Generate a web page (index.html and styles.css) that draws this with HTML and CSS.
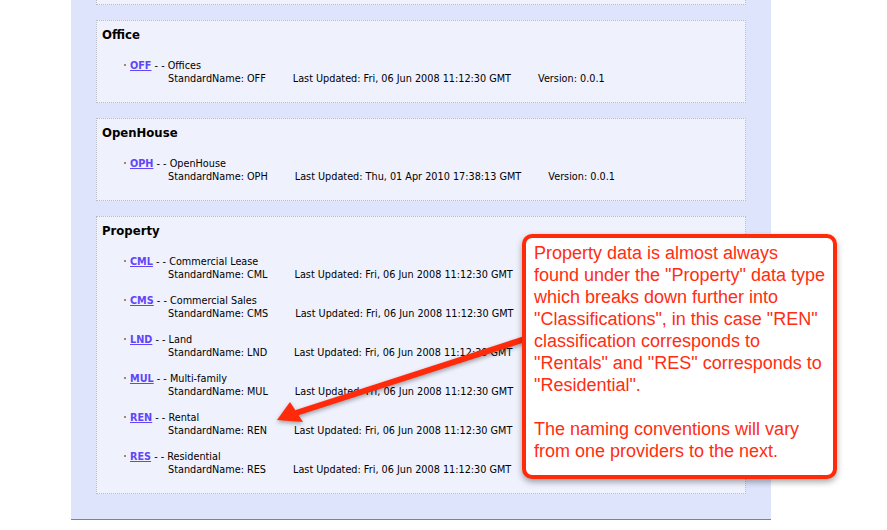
FILE: index.html
```html
<!DOCTYPE html>
<html lang="en">
<head>
    <meta charset="UTF-8">
    <title>Metadata - Resource Classes</title>
    <link rel="stylesheet" href="styles.css">
</head>
<body>
    <div class="page">
        <div class="section stub"></div>

        <div class="section">
            <h2 class="section-title">Office</h2>
            <ul class="types">
                <li>
                    <div class="type-line"><span class="dot"></span><a href="#">OFF</a> - - Offices</div>
                    <div class="meta"><span>StandardName: OFF</span><span class="upd">Last Updated: Fri, 06 Jun 2008 11:12:30 GMT</span><span class="ver">Version: 0.0.1</span></div>
                </li>
            </ul>
        </div>

        <div class="section">
            <h2 class="section-title">OpenHouse</h2>
            <ul class="types">
                <li>
                    <div class="type-line"><span class="dot"></span><a href="#">OPH</a> - - OpenHouse</div>
                    <div class="meta"><span>StandardName: OPH</span><span class="upd">Last Updated: Thu, 01 Apr 2010 17:38:13 GMT</span><span class="ver">Version: 0.0.1</span></div>
                </li>
            </ul>
        </div>

        <div class="section">
            <h2 class="section-title">Property</h2>
            <ul class="types">
                <li>
                    <div class="type-line"><span class="dot"></span><a href="#">CML</a> - - Commercial Lease</div>
                    <div class="meta"><span>StandardName: CML</span><span class="upd">Last Updated: Fri, 06 Jun 2008 11:12:30 GMT</span><span class="ver">Version: 0.0.1</span></div>
                </li>
                <li>
                    <div class="type-line"><span class="dot"></span><a href="#">CMS</a> - - Commercial Sales</div>
                    <div class="meta"><span>StandardName: CMS</span><span class="upd">Last Updated: Fri, 06 Jun 2008 11:12:30 GMT</span><span class="ver">Version: 0.0.1</span></div>
                </li>
                <li>
                    <div class="type-line"><span class="dot"></span><a href="#">LND</a> - - Land</div>
                    <div class="meta"><span>StandardName: LND</span><span class="upd">Last Updated: Fri, 06 Jun 2008 11:12:30 GMT</span><span class="ver">Version: 0.0.1</span></div>
                </li>
                <li>
                    <div class="type-line"><span class="dot"></span><a href="#">MUL</a> - - Multi-family</div>
                    <div class="meta"><span>StandardName: MUL</span><span class="upd">Last Updated: Fri, 06 Jun 2008 11:12:30 GMT</span><span class="ver">Version: 0.0.1</span></div>
                </li>
                <li>
                    <div class="type-line"><span class="dot"></span><a href="#">REN</a> - - Rental</div>
                    <div class="meta"><span>StandardName: REN</span><span class="upd">Last Updated: Fri, 06 Jun 2008 11:12:30 GMT</span><span class="ver">Version: 0.0.1</span></div>
                </li>
                <li>
                    <div class="type-line"><span class="dot"></span><a href="#">RES</a> - - Residential</div>
                    <div class="meta"><span>StandardName: RES</span><span class="upd">Last Updated: Fri, 06 Jun 2008 11:12:30 GMT</span><span class="ver">Version: 0.0.1</span></div>
                </li>
            </ul>
        </div>
    </div>

    <!-- annotation overlay -->
    <svg class="arrow" viewBox="0 0 887 530" width="887" height="530">
        <line x1="528" y1="338" x2="296" y2="413" stroke="#ff2a0a" stroke-width="6"/>
        <polygon points="277,420 290,402 303,422" fill="#ff2a0a"/>
    </svg>

    <div class="callout">
        <p>Property data is almost always found under the "Property" data type which breaks down further into "Classifications", in this case "REN" classification corresponds to "Rentals" and "RES" corresponds to "Residential".</p>
        <p>The naming conventions will vary from one providers to the next.</p>
    </div>
</body>
</html>
```

FILE: styles.css
```css
* {
    box-sizing: border-box;
}

body {
    margin: 0;
    position: relative;
    width: 887px;
    height: 530px;
    overflow: hidden;
    background: #fff;
    font-family: 'DejaVu Sans', Verdana, sans-serif;
    font-size: 9.7px;
    color: #000;
}

.page {
    width: 700px;
    margin-left: 71px;
    padding: 0 25px 25px;
    background: #dde4fb;
    border-bottom: 1px solid #5b84e2;
}

.section {
    background: #eff1fd;
    border: 1px dotted #b9bcc6;
    padding: 7px 5px 0;
    margin-bottom: 15px;
}

.section:last-child {
    margin-bottom: 0;
}

.section.stub {
    height: 5px;
    border-top: none;
    padding: 0;
}

.section-title {
    margin: 0;
    font-size: 11.7px;
    line-height: 14px;
    font-weight: bold;
}

.types {
    list-style: none;
    margin: 0;
    padding: 17px 0 17px 22px;
}

.types li {
    line-height: 13px;
    margin-bottom: 13px;
}

.types li:last-child {
    margin-bottom: 0;
}

.type-line {
    white-space: nowrap;
}

.dot {
    display: inline-block;
    width: 2px;
    height: 2px;
    margin-right: 4px;
    vertical-align: 3px;
    background: #a4876a;
}

.type-line a {
    color: #6046f6;
    font-weight: bold;
    text-decoration: underline;
}

.meta {
    padding-left: 44px;
    white-space: nowrap;
}

.upd,
.ver {
    margin-left: 27px;
}

.arrow {
    position: absolute;
    left: 0;
    top: 0;
    pointer-events: none;
    filter: drop-shadow(0 2px 2px rgba(0, 0, 0, 0.35));
}

.callout {
    position: absolute;
    left: 522px;
    top: 234px;
    width: 315px;
    height: 245px;
    padding: 4px 8px;
    background: #fff;
    border: 4px solid #ff2a0a;
    border-radius: 10px;
    box-shadow: 0 3px 6px rgba(0, 0, 0, 0.35);
    font-family: 'Liberation Sans', Arial, sans-serif;
    font-size: 18px;
    line-height: 22px;
    color: #ff2d12;
}

.callout p {
    margin: 0 0 22px;
}
```
